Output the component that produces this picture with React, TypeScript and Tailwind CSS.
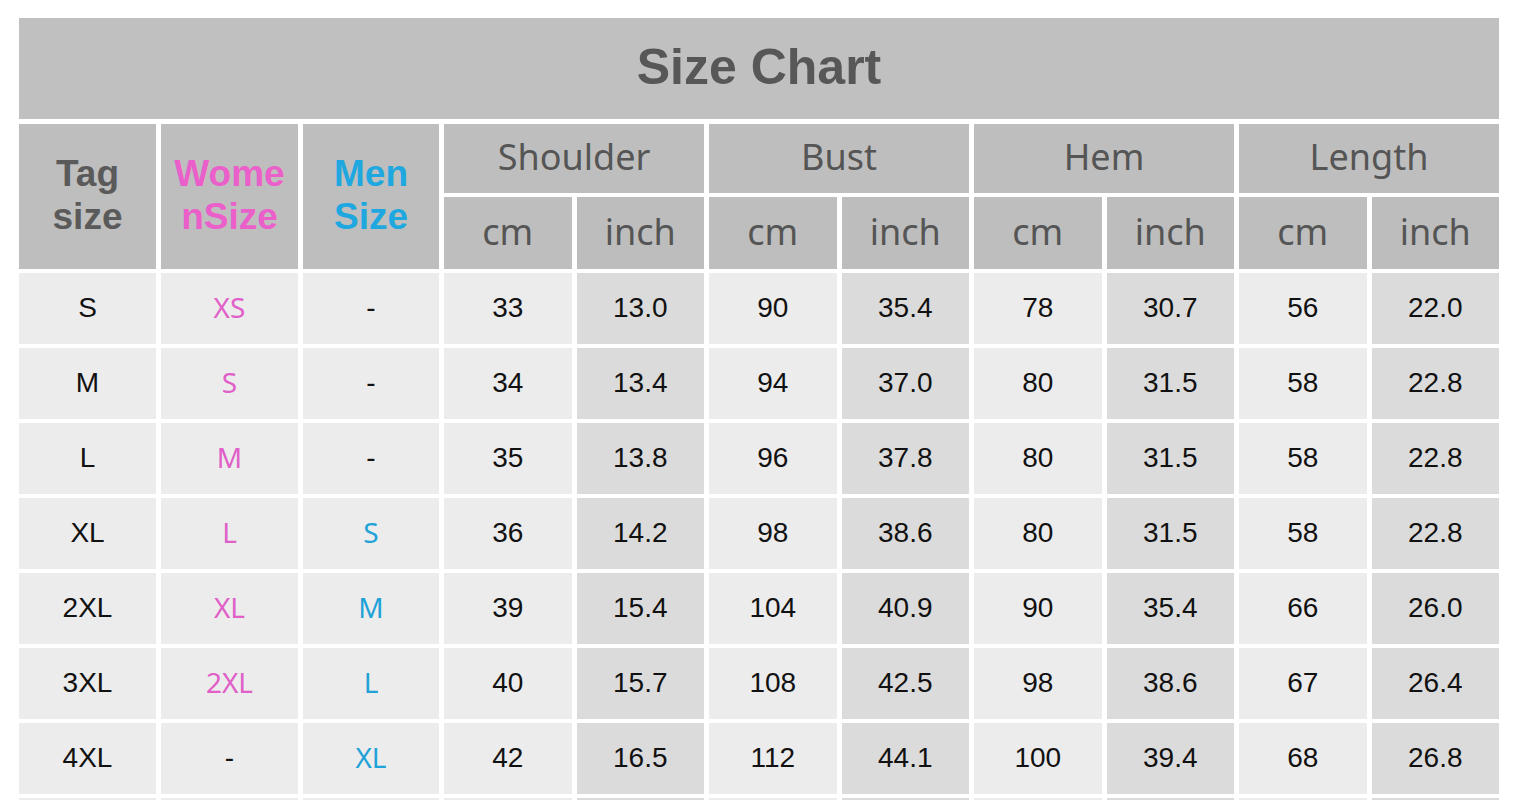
import React from "react";

type Row = {
  tag: string;
  women: string;
  men: string;
  vals: string[];
};

const rows: Row[] = [
  { tag: "S", women: "XS", men: "-", vals: ["33", "13.0", "90", "35.4", "78", "30.7", "56", "22.0"] },
  { tag: "M", women: "S", men: "-", vals: ["34", "13.4", "94", "37.0", "80", "31.5", "58", "22.8"] },
  { tag: "L", women: "M", men: "-", vals: ["35", "13.8", "96", "37.8", "80", "31.5", "58", "22.8"] },
  { tag: "XL", women: "L", men: "S", vals: ["36", "14.2", "98", "38.6", "80", "31.5", "58", "22.8"] },
  { tag: "2XL", women: "XL", men: "M", vals: ["39", "15.4", "104", "40.9", "90", "35.4", "66", "26.0"] },
  { tag: "3XL", women: "2XL", men: "L", vals: ["40", "15.7", "108", "42.5", "98", "38.6", "67", "26.4"] },
  { tag: "4XL", women: "-", men: "XL", vals: ["42", "16.5", "112", "44.1", "100", "39.4", "68", "26.8"] },
];

const groups = ["Shoulder", "Bust", "Hem", "Length"];

const headFont = { fontFamily: '"Noto Sans", "Open Sans", sans-serif' };
const dataFont = { fontFamily: '"Liberation Sans", Arial, sans-serif' };

export default function App() {
  return (
    <div className="w-full h-[800px] overflow-hidden bg-white">
      <div className="ml-[19px] mt-[18px] w-[1480px] flex flex-col">
        <div
          className="h-[101px] bg-[#c0c0c0] flex items-center justify-center text-[50px] font-bold text-[#575757]"
          style={dataFont}
        >
          <span className="-mt-[2px]">Size Chart</span>
        </div>
        <div className="mt-[5px] grid grid-cols-[137px_137px_136px_repeat(8,1fr)] grid-rows-[69px_72px] auto-rows-[71px] gap-x-[5px] gap-y-[4px]">
          <div
            className="row-span-2 bg-[#bebebe] flex items-center justify-center text-center text-[37px] leading-[43px] font-bold text-[#5a5a5a]"
            style={dataFont}
          >
            <span className="-mt-[4px]">
              Tag
              <br />
              size
            </span>
          </div>
          <div
            className="row-span-2 bg-[#bebebe] flex items-center justify-center text-center text-[37px] leading-[43px] font-bold text-[#ea5fca]"
            style={dataFont}
          >
            <span className="-mt-[4px]">
              Wome
              <br />
              nSize
            </span>
          </div>
          <div
            className="row-span-2 bg-[#bebebe] flex items-center justify-center text-center text-[37px] leading-[43px] font-bold text-[#1fa8e0]"
            style={dataFont}
          >
            <span className="-mt-[4px]">
              Men
              <br />
              Size
            </span>
          </div>
          {groups.map((g) => (
            <div
              key={g}
              className="col-span-2 bg-[#bebebe] flex items-center justify-center text-[36px] text-[#555555]"
              style={headFont}
            >
              <span className="-mt-[4px]">{g}</span>
            </div>
          ))}
          {groups.map((g) => (
            <React.Fragment key={g + "-units"}>
              <div
                className="bg-[#bebebe] flex items-center justify-center text-[36px] text-[#555555]"
                style={headFont}
              >
                <span className="-mt-[3px]">cm</span>
              </div>
              <div
                className="bg-[#bdbdbd] flex items-center justify-center text-[36px] text-[#555555]"
                style={headFont}
              >
                <span className="-mt-[3px]">inch</span>
              </div>
            </React.Fragment>
          ))}
          {rows.map((r) => (
            <React.Fragment key={r.tag}>
              <div
                className="bg-[#ececec] flex items-center justify-center text-[28px] text-[#111111]"
                style={dataFont}
              >
                <span className="-mt-[1px]">{r.tag}</span>
              </div>
              <div
                className={
                  r.women === "-"
                    ? "bg-[#ececec] flex items-center justify-center text-[28px] text-[#111111]"
                    : "bg-[#ececec] flex items-center justify-center text-[28px] text-[#e060c8]"
                }
                style={r.women === "-" ? dataFont : headFont}
              >
                <span className={r.women === "-" ? "-mt-[1px]" : "-mt-[4px]"}>{r.women}</span>
              </div>
              <div
                className={
                  r.men === "-"
                    ? "bg-[#ececec] flex items-center justify-center text-[28px] text-[#111111]"
                    : "bg-[#ececec] flex items-center justify-center text-[28px] text-[#1ea2d8]"
                }
                style={r.men === "-" ? dataFont : headFont}
              >
                <span className={r.men === "-" ? "-mt-[1px]" : "-mt-[4px]"}>{r.men}</span>
              </div>
              {r.vals.map((v, i) => (
                <div
                  key={i}
                  className={
                    i % 2 === 0
                      ? "bg-[#ececec] flex items-center justify-center text-[28px] text-[#111111]"
                      : "bg-[#dbdbdb] flex items-center justify-center text-[28px] text-[#111111]"
                  }
                  style={dataFont}
                >
                  <span className="-mt-[1px]">{v}</span>
                </div>
              ))}
            </React.Fragment>
          ))}
          {Array.from({ length: 11 }).map((_, i) => (
            <div
              key={"last" + i}
              className={i >= 3 && i % 2 === 0 ? "bg-[#dbdbdb]" : "bg-[#ececec]"}
            />
          ))}
        </div>
      </div>
    </div>
  );
}
